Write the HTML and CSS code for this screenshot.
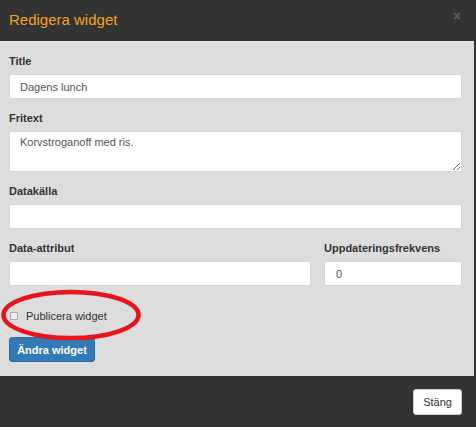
FILE: index.html
```html
<!DOCTYPE html>
<html lang="sv">
<head>
<meta charset="utf-8">
<title>Redigera widget</title>
<link rel="stylesheet" href="styles.css">
</head>
<body>
<div class="modal">
  <div class="modal-header">
    <h1 class="modal-title">Redigera widget</h1>
    <span class="close">×</span>
  </div>
  <div class="modal-body">
    <div class="group">
      <label class="lbl">Title</label>
      <input class="field" type="text" value="Dagens lunch">
    </div>
    <div class="group">
      <label class="lbl">Fritext</label>
      <textarea class="field area">Korvstroganoff med ris.</textarea>
    </div>
    <div class="group">
      <label class="lbl">Datakälla</label>
      <input class="field" type="text" value="">
    </div>
    <div class="row">
      <div class="group">
        <label class="lbl">Data-attribut</label>
        <input class="field" type="text" value="">
      </div>
      <div class="group">
        <label class="lbl">Uppdateringsfrekvens</label>
        <input class="field num" type="text" value="0">
      </div>
    </div>
    <div class="check-row">
      <span class="checkbox"></span>
      <span class="check-label">Publicera widget</span>
      <svg class="ring" width="144" height="56" viewBox="0 0 144 56">
        <ellipse cx="71" cy="27" rx="67.5" ry="23" fill="none" stroke="#e8141b" stroke-width="4.5"/>
      </svg>
    </div>
    <button class="btn-primary">Ändra widget</button>
  </div>
  <div class="modal-footer">
    <button class="btn-default">Stäng</button>
  </div>
</div>
</body>
</html>
```

FILE: styles.css
```css
* { box-sizing: border-box; }
html, body { margin: 0; padding: 0; }
body {
  background: #333333;
  font-family: "Liberation Sans", Arial, sans-serif;
  color: #333;
  width: 476px;
  height: 427px;
  overflow: hidden;
}
.modal {
  width: 474px;
}
.modal-header {
  height: 41px;
  display: flex;
  align-items: center;
  justify-content: space-between;
  padding: 0 13px 2px 9px;
}
.modal-title {
  margin: 0;
  font-size: 15px;
  font-weight: normal;
  color: #f2a11f;
}
.close {
  color: #5c5c5c;
  font-size: 14px;
  font-weight: bold;
  line-height: 1;
  margin-top: -8px;
}
.modal-body {
  background: #dddddd;
  border-top: 2px solid #e6e6e6;
  padding: 11px 12px 14px 9px;
  height: 335px;
}
.group {
  margin-bottom: 12px;
}
.lbl {
  display: block;
  font-size: 11px;
  font-weight: bold;
  line-height: 15px;
  margin-bottom: 5px;
  color: #333;
}
.field {
  display: block;
  width: 100%;
  height: 25px;
  border: 1px solid #d6d6d6;
  border-radius: 2px;
  background: #fff;
  font-family: "Liberation Sans", Arial, sans-serif;
  font-size: 11px;
  color: #555;
  padding: 0 10px;
  margin: 0;
  outline: none;
}
.area {
  height: 41px;
  padding: 3px 10px;
  resize: vertical;
  line-height: 14px;
}
.num { padding-left: 11px; }
.row {
  display: grid;
  grid-template-columns: 1fr 138px;
  column-gap: 13px;
}
.check-row {
  position: relative;
  display: flex;
  align-items: center;
  gap: 8px;
  height: 16px;
  margin-top: 10px;
  margin-bottom: 13px;
  padding-left: 1px;
}
.checkbox {
  display: inline-block;
  width: 8px;
  height: 8px;
  border: 1px solid #a9a9a9;
  border-radius: 1px;
  background: #eeeeee;
}
.check-label {
  font-size: 11px;
  color: #333;
}
.ring {
  position: absolute;
  left: -9px;
  top: -20px;
  pointer-events: none;
}
.btn-primary {
  display: block;
  width: 86px;
  height: 25px;
  background: #337ab7;
  border: 1px solid #2e6da4;
  border-radius: 3px;
  color: #fff;
  font-family: "Liberation Sans", Arial, sans-serif;
  font-size: 11px;
  font-weight: bold;
  padding: 0;
}
.modal-footer {
  height: 51px;
  display: flex;
  justify-content: flex-end;
  align-items: center;
  padding: 0 12px 0 0;
}
.btn-default {
  width: 49px;
  height: 26px;
  background: #fff;
  border: 1px solid #ccc;
  border-radius: 3px;
  font-family: "Liberation Sans", Arial, sans-serif;
  font-size: 11px;
  color: #333;
  padding: 0;
}
```
